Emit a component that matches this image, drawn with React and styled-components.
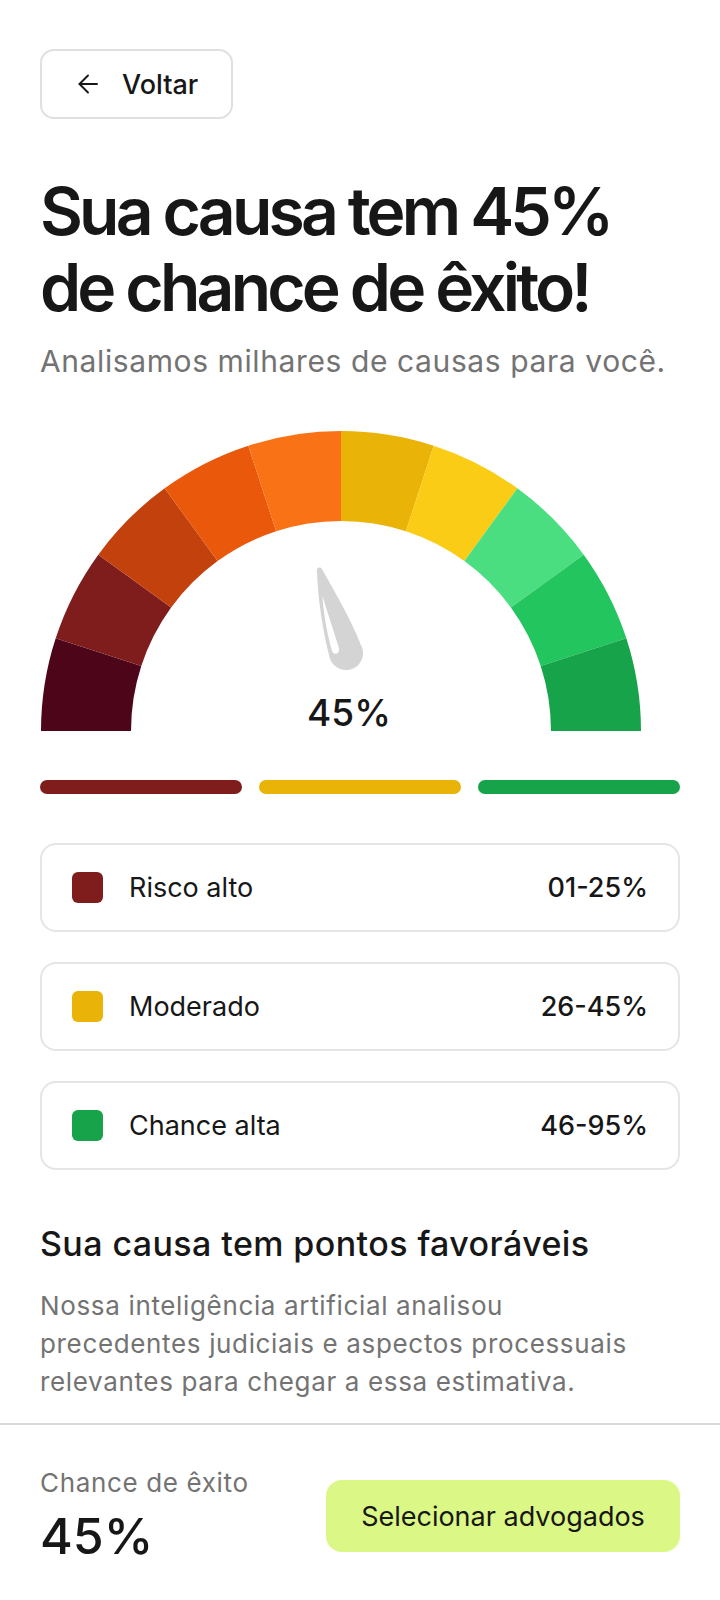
import React from "react";
import styled, { createGlobalStyle } from "styled-components";

const GlobalStyle = createGlobalStyle`
  * { box-sizing: border-box; }
  html, body { margin: 0; padding: 0; background: #ffffff; }
  body {
    font-family: Inter, "Noto Sans", "Liberation Sans", sans-serif;
    color: #171717;
    -webkit-font-smoothing: antialiased;
  }
`;

const Page = styled.div`
  width: 720px;
  min-height: 1600px;
  display: flex;
  flex-direction: column;
  background: #ffffff;
`;

const Main = styled.main`
  display: flex;
  flex-direction: column;
  padding: 49px 40px 0;
`;

const BackButton = styled.button`
  align-self: flex-start;
  height: 70px;
  display: inline-flex;
  align-items: center;
  gap: 24px;
  padding: 0 33px 0 36px;
  border: 2px solid #e0e0e0;
  border-radius: 14px;
  background: #ffffff;
  font-family: inherit;
  font-size: 27px;
  font-weight: 500;
  color: #171717;
  cursor: pointer;
`;

const Title = styled.h1`
  margin: 54px 0 0;
  font-size: 66px;
  line-height: 76px;
  font-weight: 600;
  letter-spacing: -0.058em;
  color: #171717;
`;

const Subtitle = styled.p`
  margin: 16px 0 0;
  font-size: 30px;
  line-height: 40px;
  font-weight: 400;
  letter-spacing: 0.02em;
  color: #737373;
`;

const GaugeWrap = styled.div`
  position: relative;
  margin-top: 50px;
  width: 600px;
  height: 300px;
  margin-left: 1px;
`;

const GaugeValue = styled.span`
  position: absolute;
  left: 308px;
  bottom: -4px;
  transform: translateX(-50%);
  font-size: 37px;
  line-height: 44px;
  font-weight: 500;
  color: #171717;
`;

const Bars = styled.div`
  margin-top: 49px;
  display: grid;
  grid-template-columns: repeat(3, 1fr);
  gap: 17px;
`;

const Bar = styled.div`
  height: 14px;
  border-radius: 7px;
  background: ${(p) => p.$color};
`;

const Legend = styled.ul`
  list-style: none;
  margin: 49px 0 0;
  padding: 0;
  display: flex;
  flex-direction: column;
  gap: 30px;
`;

const LegendCard = styled.li`
  height: 89px;
  display: flex;
  align-items: center;
  padding: 0 30px 0 30px;
  border: 2px solid #e5e5e5;
  border-radius: 16px;
  background: #ffffff;
`;

const Swatch = styled.span`
  width: 31px;
  height: 31px;
  border-radius: 6px;
  background: ${(p) => p.$color};
  flex-shrink: 0;
`;

const LegendLabel = styled.span`
  margin-left: 26px;
  flex: 1;
  font-size: 27px;
  font-weight: 400;
  color: #171717;
`;

const LegendRange = styled.span`
  font-size: 27px;
  font-weight: 500;
  color: #171717;
`;

const Section = styled.section`
  margin-top: 52px;
  display: flex;
  flex-direction: column;
  gap: 21px;
`;

const SectionTitle = styled.h2`
  margin: 0;
  font-size: 34px;
  line-height: 44px;
  font-weight: 500;
  letter-spacing: 0.012em;
  color: #171717;
`;

const SectionText = styled.p`
  margin: 0;
  font-size: 26px;
  line-height: 38px;
  font-weight: 400;
  letter-spacing: 0.025em;
  color: #737373;
`;

const Footer = styled.footer`
  margin-top: 22px;
  border-top: 2px solid #d9d9d9;
  padding: 41px 40px 33px;
  display: flex;
  align-items: center;
  justify-content: space-between;
`;

const Score = styled.div`
  display: flex;
  flex-direction: column;
  gap: 6px;
`;

const ScoreLabel = styled.span`
  font-size: 26px;
  line-height: 34px;
  letter-spacing: 0.025em;
  color: #737373;
`;

const ScoreValue = styled.span`
  font-size: 50px;
  line-height: 60px;
  font-weight: 500;
  color: #171717;
`;

const PrimaryButton = styled.button`
  width: 354px;
  height: 72px;
  border: none;
  border-radius: 16px;
  background: #dbf786;
  font-family: inherit;
  font-size: 27px;
  font-weight: 400;
  color: #171717;
  cursor: pointer;
`;

const SEGMENTS = [
  "#4c0519",
  "#7f1d1d",
  "#c2410c",
  "#ea580c",
  "#f97316",
  "#eab308",
  "#facc15",
  "#4ade80",
  "#22c55e",
  "#16a34a",
];

const CX = 300;
const CY = 300;
const R_OUT = 300;
const R_IN = 210;

function polar(r, deg) {
  const a = (deg * Math.PI) / 180;
  return [CX - r * Math.cos(a), CY - r * Math.sin(a)];
}

function segmentPath(i, total) {
  const step = 180 / total;
  const a0 = i * step;
  const a1 = (i + 1) * step;
  const [x0, y0] = polar(R_OUT, a0);
  const [x1, y1] = polar(R_OUT, a1);
  const [x2, y2] = polar(R_IN, a1);
  const [x3, y3] = polar(R_IN, a0);
  return `M ${x0} ${y0} A ${R_OUT} ${R_OUT} 0 0 1 ${x1} ${y1} L ${x2} ${y2} A ${R_IN} ${R_IN} 0 0 0 ${x3} ${y3} Z`;
}

function Gauge({ value }) {
  return (
    <GaugeWrap>
      <svg width="600" height="300" viewBox="0 0 600 300">
        {SEGMENTS.map((c, i) => (
          <path key={c} d={segmentPath(i, SEGMENTS.length)} fill={c} />
        ))}
        {/* needle: teardrop with a thin hollow slit */}
        <path
          d="M 276 141 C 275 137 279 135 281 138 C 292 158 310 188 319.7 213.5 A 17 17 0 1 1 288.6 226.4 C 282 200 277 170 276 141 Z"
          fill="#d4d4d4"
        />
        <path
          d="M 281.5 165 C 286 180 294 204 298 217 C 299 223 293 225 291 220 C 287 206 283 186 281.5 167 Z"
          fill="#ffffff"
        />
      </svg>
      <GaugeValue>{value}%</GaugeValue>
    </GaugeWrap>
  );
}

const LEVELS = [
  { label: "Risco alto", range: "01-25%", color: "#7f1d1d" },
  { label: "Moderado", range: "26-45%", color: "#eab308" },
  { label: "Chance alta", range: "46-95%", color: "#16a34a" },
];

function ArrowLeft() {
  return (
    <svg width="20" height="20" viewBox="0 0 20 20" fill="none" stroke="#171717" strokeWidth="1.9" strokeLinecap="round" strokeLinejoin="round">
      <path d="M19 10H1.5" />
      <path d="M10 1.5 1.5 10 10 18.5" />
    </svg>
  );
}

export default function App() {
  const chance = 45;
  return (
    <>
      <GlobalStyle />
      <Page>
        <Main>
          <BackButton type="button">
            <ArrowLeft />
            Voltar
          </BackButton>
          <Title>
            Sua causa tem {chance}%
            <br />
            de chance de êxito!
          </Title>
          <Subtitle>Analisamos milhares de causas para você.</Subtitle>
          <Gauge value={chance} />
          <Bars>
            {LEVELS.map((l) => (
              <Bar key={l.label} $color={l.color} />
            ))}
          </Bars>
          <Legend>
            {LEVELS.map((l) => (
              <LegendCard key={l.label}>
                <Swatch $color={l.color} />
                <LegendLabel>{l.label}</LegendLabel>
                <LegendRange>{l.range}</LegendRange>
              </LegendCard>
            ))}
          </Legend>
          <Section>
            <SectionTitle>Sua causa tem pontos favoráveis</SectionTitle>
            <SectionText>
              Nossa inteligência artificial analisou
              <br />
              precedentes judiciais e aspectos processuais
              <br />
              relevantes para chegar a essa estimativa.
            </SectionText>
          </Section>
        </Main>
        <Footer>
          <Score>
            <ScoreLabel>Chance de êxito</ScoreLabel>
            <ScoreValue>{chance}%</ScoreValue>
          </Score>
          <PrimaryButton type="button">Selecionar advogados</PrimaryButton>
        </Footer>
      </Page>
    </>
  );
}
